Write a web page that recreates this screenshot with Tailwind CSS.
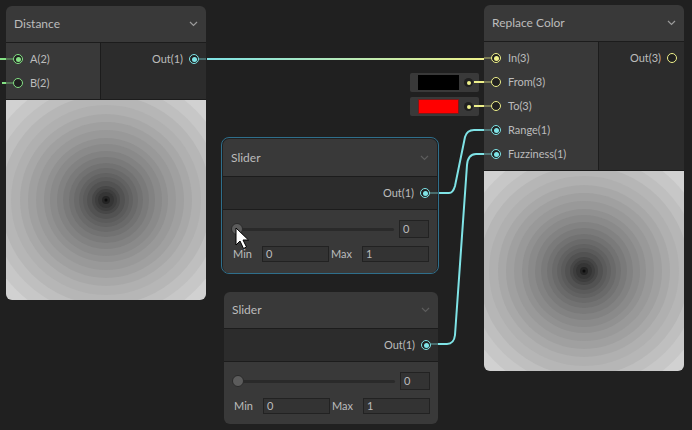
<!DOCTYPE html>
<html lang="en">
<head>
  <meta charset="UTF-8" />
  <title>Shader Graph</title>
  <script src="https://cdn.jsdelivr.net/npm/@tailwindcss/browser@4"></script>
</head>
<body class="bg-[#202020]">
  <svg class="hidden">
    <symbol id="dist" viewBox="0 0 200 200">
      <rect width="200" height="200" fill="#d1d1d1"/>
      <circle cx="100" cy="100" r="127" fill="#c7c7c7"/>
      <circle cx="100" cy="100" r="115" fill="#bfbfbf"/>
      <circle cx="100" cy="100" r="105" fill="#b6b6b6"/>
      <circle cx="100" cy="100" r="95" fill="#b0b0b0"/>
      <circle cx="100" cy="100" r="86" fill="#a8a8a8"/>
      <circle cx="100" cy="100" r="78" fill="#a0a0a0"/>
      <circle cx="100" cy="100" r="70" fill="#999999"/>
      <circle cx="100" cy="100" r="62" fill="#919191"/>
      <circle cx="100" cy="100" r="56" fill="#8a8a8a"/>
      <circle cx="100" cy="100" r="49" fill="#828282"/>
      <circle cx="100" cy="100" r="43" fill="#7a7a7a"/>
      <circle cx="100" cy="100" r="37" fill="#727272"/>
      <circle cx="100" cy="100" r="32" fill="#6a6a6a"/>
      <circle cx="100" cy="100" r="27" fill="#626262"/>
      <circle cx="100" cy="100" r="23" fill="#5b5b5b"/>
      <circle cx="100" cy="100" r="19" fill="#525252"/>
      <circle cx="100" cy="100" r="14" fill="#474747"/>
      <circle cx="100" cy="100" r="11" fill="#3e3e3e"/>
      <circle cx="100" cy="100" r="8" fill="#353535"/>
      <circle cx="100" cy="100" r="4" fill="#242424"/>
      <circle cx="100" cy="100" r="1.5" fill="#0c0c0c"/>
    </symbol>
  </svg>

  <div class="relative w-[692px] h-[430px] overflow-hidden font-['Lato',sans-serif] text-[11px] text-[#bcbcbc]">

    <!-- Distance -->
    <div class="absolute left-[6px] top-[6px] w-[200px] h-[294px] rounded-[6px] overflow-hidden flex flex-col">
      <div class="h-[37px] shrink-0 bg-[#393939] flex items-center justify-between pl-[8px] pr-[8px] border-b border-[#1c1c1c] text-[12px]">
        <span>Distance</span>
        <svg width="9" height="6" viewBox="0 0 9 6"><path d="M1 1l3.500 3.500L8 1" fill="none" stroke="#9a9a9a" stroke-width="1.200"/></svg>
      </div>
      <div class="h-[56px] shrink-0 flex">
        <div class="w-[95px] bg-[#393939] border-r border-[#1c1c1c] pt-[4px] pl-[7px] flex flex-col">
          <div class="h-[24px] flex items-center gap-[7px]">
            <span class="w-[10px] h-[10px] rounded-full border-[1.5px] border-[#84e184] bg-[#202020] flex items-center justify-center"><span class="w-[5px] h-[5px] rounded-full bg-[#84e184]"></span></span>A(2)
          </div>
          <div class="h-[24px] flex items-center gap-[7px]">
            <span class="w-[10px] h-[10px] rounded-full border-[1.5px] border-[#84e184] bg-[#202020]"></span>B(2)
          </div>
        </div>
        <div class="flex-1 bg-[#2c2c2c] pt-[4px] pr-[7px]">
          <div class="h-[24px] flex items-center justify-end gap-[6px]">
            Out(1)
            <span class="w-[10px] h-[10px] rounded-full border-[1.5px] border-[#7fe3e6] bg-[#202020] flex items-center justify-center"><span class="w-[5px] h-[5px] rounded-full bg-[#7fe3e6]"></span></span>
          </div>
        </div>
      </div>
      <svg class="w-[200px] h-[201px] shrink-0 border-t border-[#1c1c1c]"><use href="#dist" width="200" height="200"/></svg>
    </div>

    <!-- Replace Color -->
    <div class="absolute left-[484px] top-[5px] w-[200px] h-[366px] rounded-[6px] overflow-hidden flex flex-col">
      <div class="h-[37px] shrink-0 bg-[#393939] flex items-center justify-between pl-[8px] pr-[8px] border-b border-[#1c1c1c] text-[12px]">
        <span>Replace Color</span>
        <svg width="9" height="6" viewBox="0 0 9 6"><path d="M1 1l3.500 3.500L8 1" fill="none" stroke="#9a9a9a" stroke-width="1.200"/></svg>
      </div>
      <div class="h-[128px] shrink-0 flex">
        <div class="w-[115px] bg-[#393939] border-r border-[#1c1c1c] pt-[4px] pl-[7px] flex flex-col">
          <div class="h-[24px] flex items-center gap-[7px]">
            <span class="w-[10px] h-[10px] rounded-full border-[1.5px] border-[#eef08a] bg-[#202020] flex items-center justify-center"><span class="w-[5px] h-[5px] rounded-full bg-[#eef08a]"></span></span>In(3)
          </div>
          <div class="h-[24px] flex items-center gap-[7px]">
            <span class="w-[10px] h-[10px] rounded-full border-[1.5px] border-[#eef08a] bg-[#202020]"></span>From(3)
          </div>
          <div class="h-[24px] flex items-center gap-[7px]">
            <span class="w-[10px] h-[10px] rounded-full border-[1.5px] border-[#eef08a] bg-[#202020]"></span>To(3)
          </div>
          <div class="h-[24px] flex items-center gap-[7px]">
            <span class="w-[10px] h-[10px] rounded-full border-[1.5px] border-[#7fe3e6] bg-[#202020] flex items-center justify-center"><span class="w-[5px] h-[5px] rounded-full bg-[#7fe3e6]"></span></span>Range(1)
          </div>
          <div class="h-[24px] flex items-center gap-[7px]">
            <span class="w-[10px] h-[10px] rounded-full border-[1.5px] border-[#7fe3e6] bg-[#202020] flex items-center justify-center"><span class="w-[5px] h-[5px] rounded-full bg-[#7fe3e6]"></span></span>Fuzziness(1)
          </div>
        </div>
        <div class="flex-1 bg-[#2c2c2c] pt-[4px] pr-[7px]">
          <div class="h-[24px] flex items-center justify-end gap-[6px]">
            Out(3)
            <span class="w-[10px] h-[10px] rounded-full border-[1.5px] border-[#eef08a] bg-[#202020]"></span>
          </div>
        </div>
      </div>
      <svg class="w-[200px] h-[201px] shrink-0 border-t border-[#1c1c1c]"><use href="#dist" width="200" height="200"/></svg>
    </div>

    <!-- color swatches -->
    <div class="absolute left-[410px] top-[73px] w-[69px] h-[19px] bg-[#393939] rounded-[2px] flex items-center pl-[8px]">
      <span class="w-[41px] h-[15px] bg-black"></span>
      <span class="ml-[5px] w-[9px] h-[9px] rounded-full bg-[#202020] flex items-center justify-center"><span class="w-[4px] h-[4px] rounded-full bg-[#eef08a]"></span></span>
    </div>
    <div class="absolute left-[410px] top-[97px] w-[69px] h-[19px] bg-[#393939] rounded-[2px] flex items-center pl-[8px]">
      <span class="w-[41px] h-[15px] bg-[#ff0000] border border-[#7a1a1a]"></span>
      <span class="ml-[5px] w-[9px] h-[9px] rounded-full bg-[#202020] flex items-center justify-center"><span class="w-[4px] h-[4px] rounded-full bg-[#eef08a]"></span></span>
    </div>

    <!-- Slider selected -->
    <div class="absolute left-[221px] top-[137px] w-[218px] h-[137px] rounded-[8px] border border-[#2f6f8c]"></div>
    <div class="absolute left-[223px] top-[139px] w-[214px] h-[134px] rounded-[6px] overflow-hidden flex flex-col">
      <div class="h-[38px] shrink-0 bg-[#393939] flex items-center justify-between pl-[8px] pr-[8px] border-b border-[#1c1c1c] text-[12px]">
        <span>Slider</span>
        <svg width="9" height="6" viewBox="0 0 9 6"><path d="M1 1l3.500 3.500L8 1" fill="none" stroke="#5c5c5c" stroke-width="1.200"/></svg>
      </div>
      <div class="h-[33px] shrink-0 bg-[#2c2c2c] border-b border-[#1c1c1c] flex items-center justify-end gap-[6px] pr-[7px]">
        Out(1)
        <span class="w-[10px] h-[10px] rounded-full border-[1.5px] border-[#7fe3e6] bg-[#202020] flex items-center justify-center"><span class="w-[5px] h-[5px] rounded-full bg-[#7fe3e6]"></span></span>
      </div>
      <div class="flex-1 bg-[#393939] pl-[9px] pr-[8px] pt-[10px]">
        <div class="h-[18px] flex items-center">
          <div class="relative w-[162px] h-[3px] bg-[#2a2a2a] rounded-full">
            <span class="absolute -left-[1px] -top-[4.5px] w-[12px] h-[12px] rounded-full bg-[#5c5c5c] border border-[#2a2a2a]"></span>
          </div>
          <span class="ml-auto w-[30px] h-[18px] bg-[#333333] border border-[#222222] pl-[3px] leading-[16px]">0</span>
        </div>
        <div class="h-[16px] mt-[8px] flex items-center">
          <span class="w-[30px] pl-[1px]">Min</span>
          <span class="w-[67px] h-[16px] bg-[#333333] border border-[#222222] pl-[3px] leading-[14px]">0</span>
          <span class="w-[33px] pl-[2px]">Max</span>
          <span class="flex-1 h-[16px] bg-[#333333] border border-[#222222] pl-[3px] leading-[14px]">1</span>
        </div>
      </div>
    </div>

    <!-- Slider -->
    <div class="absolute left-[224px] top-[292px] w-[214px] h-[132px] rounded-[6px] overflow-hidden flex flex-col">
      <div class="h-[37px] shrink-0 bg-[#393939] flex items-center justify-between pl-[8px] pr-[8px] border-b border-[#1c1c1c] text-[12px]">
        <span>Slider</span>
        <svg width="9" height="6" viewBox="0 0 9 6"><path d="M1 1l3.500 3.500L8 1" fill="none" stroke="#5c5c5c" stroke-width="1.200"/></svg>
      </div>
      <div class="h-[33px] shrink-0 bg-[#2c2c2c] border-b border-[#1c1c1c] flex items-center justify-end gap-[6px] pr-[7px]">
        Out(1)
        <span class="w-[10px] h-[10px] rounded-full border-[1.5px] border-[#7fe3e6] bg-[#202020] flex items-center justify-center"><span class="w-[5px] h-[5px] rounded-full bg-[#7fe3e6]"></span></span>
      </div>
      <div class="flex-1 bg-[#393939] pl-[9px] pr-[8px] pt-[10px]">
        <div class="h-[18px] flex items-center">
          <div class="relative w-[162px] h-[3px] bg-[#2a2a2a] rounded-full">
            <span class="absolute -left-[1px] -top-[4.5px] w-[12px] h-[12px] rounded-full bg-[#5c5c5c] border border-[#2a2a2a]"></span>
          </div>
          <span class="ml-auto w-[30px] h-[18px] bg-[#333333] border border-[#222222] pl-[3px] leading-[16px]">0</span>
        </div>
        <div class="h-[16px] mt-[8px] flex items-center">
          <span class="w-[30px] pl-[1px]">Min</span>
          <span class="w-[67px] h-[16px] bg-[#333333] border border-[#222222] pl-[3px] leading-[14px]">0</span>
          <span class="w-[33px] pl-[2px]">Max</span>
          <span class="flex-1 h-[16px] bg-[#333333] border border-[#222222] pl-[3px] leading-[14px]">1</span>
        </div>
      </div>
    </div>

    <!-- wires -->
    <svg class="absolute inset-0 pointer-events-none" width="692" height="430" fill="none">
      <defs>
        <linearGradient id="outIn" gradientUnits="userSpaceOnUse" x1="206" y1="0" x2="484" y2="0">
          <stop offset="0" stop-color="#7fe3e6"/>
          <stop offset="1" stop-color="#eef08a"/>
        </linearGradient>
      </defs>
      <g stroke-width="2">
        <path d="M0 59H6" stroke="#84e184"/>
        <path d="M2 83H6" stroke="#84e184"/>
        <path d="M207 59H484" stroke="url(#outIn)"/>
        <path d="M439 193H449Q453 193 455 186L465 137Q467 130 474 130H484" stroke="#7fe3e6"/>
        <path d="M438 344H447Q454 344 455 335L467 165Q468 154 476 154H484" stroke="#7fe3e6"/>
        <path d="M474 82H484M474 106H484" stroke="#eef08a"/>
      </g>
      <g stroke-width="2" opacity=".35">
        <path d="M6 59H13M6 83H13" stroke="#84e184"/>
        <path d="M199 59H206" stroke="#7fe3e6"/>
        <path d="M484 58H491M484 82H491M484 106H491" stroke="#eef08a"/>
        <path d="M484 130H491M484 154H491" stroke="#7fe3e6"/>
        <path d="M430 193H438M431 344H438" stroke="#7fe3e6"/>
      </g>
      <path d="M236 228V245L240 241L243.500 248.500L246.500 247L243 240H248.500Z" fill="#fff" stroke="#000" stroke-width="1"/>
    </svg>
  </div>
</body>
</html>
